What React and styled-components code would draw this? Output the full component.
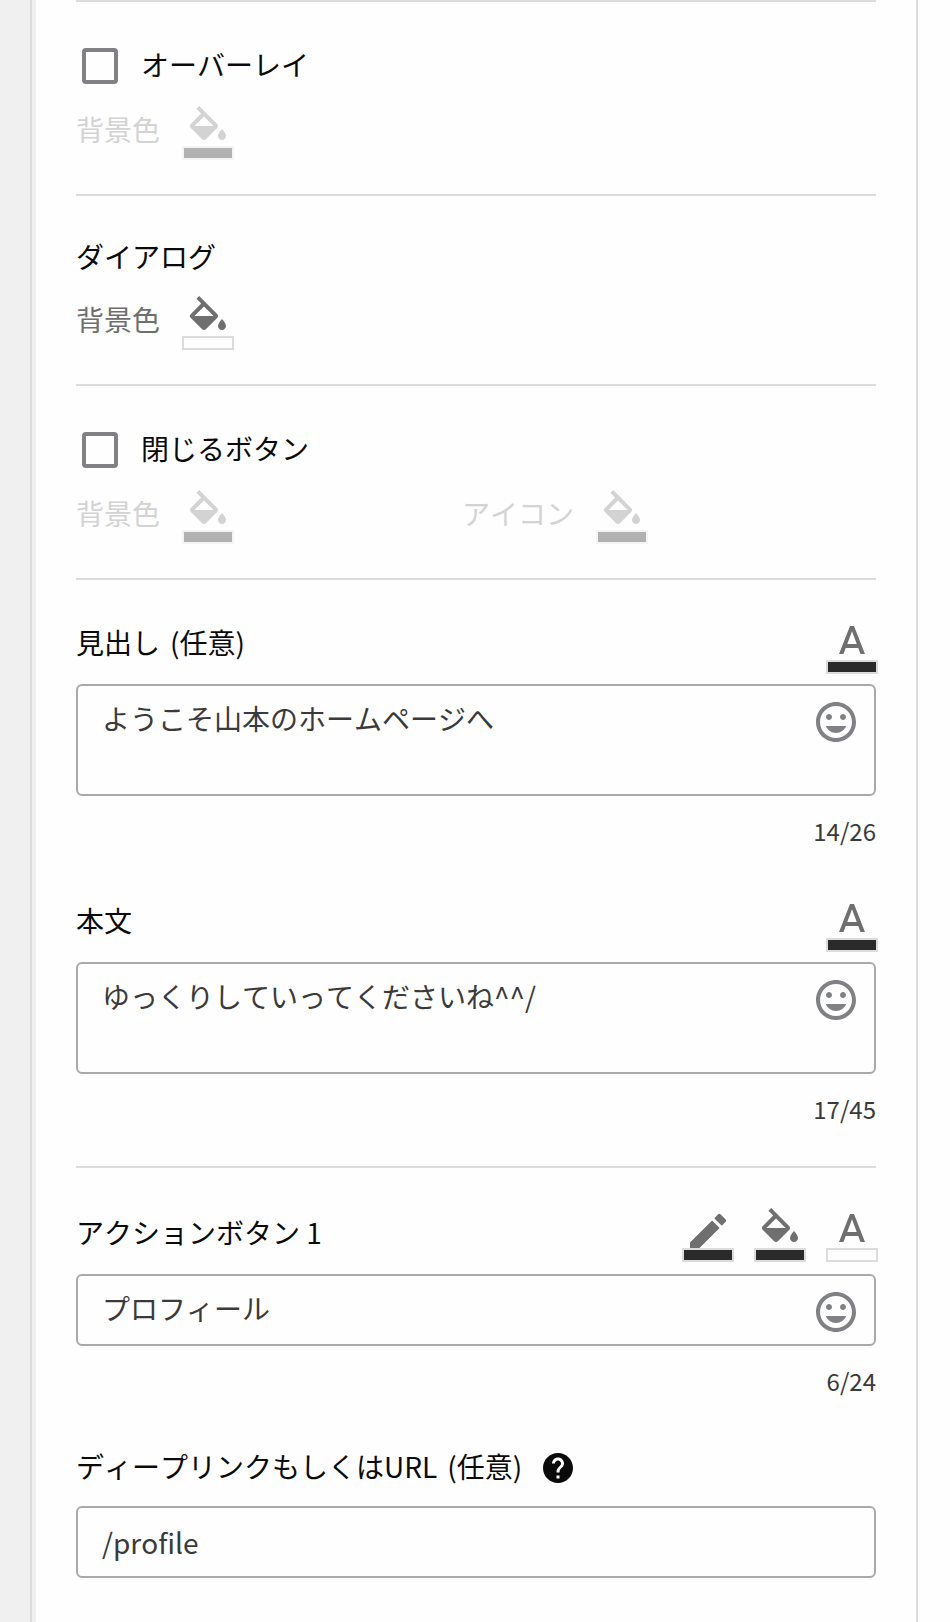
import React, { useId, useState } from "react";
import styled, { createGlobalStyle, css } from "styled-components";

const color = {
  page: "#fefefe",
  rail: "#f0f0f0",
  line: "#dcdcdc",
  ink: "#0a0a0a",
  text: "#3a3a3a",
  muted: "#6f6f6f",
  disabled: "#d3d3d3",
  control: "#808184",
  field: "#a9a9ae",
  swatch: "#2a2a2a",
};

const GlobalStyle = createGlobalStyle`
  *, *::before, *::after { box-sizing: border-box; }
  body {
    margin: 0;
    background: ${color.page};
    color: ${color.ink};
    font-family: "Noto Sans CJK JP", sans-serif;
    font-size: 28px;
    font-kerning: none;
  }
  button, input, textarea { font: inherit; font-kerning: none; }
`;

const Shell = styled.div`
  display: flex;
  min-height: 100vh;
  padding-right: 32px;
`;

const Rail = styled.div`
  flex: none;
  width: 30px;
  background: ${color.rail};
`;

const Panel = styled.main`
  display: flex;
  flex: 1;
  min-width: 0;
  border: solid ${color.line};
  border-width: 0 2px;
`;

const PanelEdge = styled.div`
  flex: none;
  width: 4px;
  background: ${color.rail};
`;

const Form = styled.form`
  flex: 1;
  min-width: 0;
  padding: 0 40px;
`;

const Section = styled.section`
  padding: 40px 0 ${(p) => p.$bottom || 34}px;
  border-top: 2px solid ${color.line};
`;

const SectionTitle = styled.h2`
  margin: 0 0 20px;
  font-size: 28px;
  font-weight: 400;
  line-height: 40px;
`;

const CheckRow = styled.div`
  display: flex;
  align-items: center;
  gap: 17px;
  height: 48px;
  margin-bottom: 16px;
`;

const Checkbox = styled.input`
  appearance: none;
  flex: none;
  width: 36px;
  height: 36px;
  margin: 6px;
  border: 4px solid ${color.control};
  border-radius: 4px;
  background: ${color.page};

  &:checked {
    background: ${color.control};
  }
`;

const CheckLabel = styled.label`
  padding-bottom: 4px;
  line-height: 40px;
`;

const ColorGrid = styled.div`
  display: grid;
  grid-template-columns: calc(50% - 14px) 1fr;
`;

const ColorItem = styled.div`
  display: flex;
  align-items: flex-start;
  gap: 22px;
`;

const ColorName = styled.span`
  color: ${(p) => (p.$disabled ? color.disabled : color.muted)};
  line-height: 46px;
`;

const PickerButton = styled.button`
  display: flex;
  flex-direction: column;
  align-items: center;
  flex: none;
  width: 52px;
  padding: 0;
  border: 0;
  background: none;
  color: ${color.muted};
  cursor: pointer;

  &:disabled {
    color: ${color.disabled};
    cursor: default;
  }
`;

const Swatch = styled.span`
  width: 52px;
  height: 14px;
  border: 2px solid ${color.line};
  background: ${(p) => p.$fill};

  ${PickerButton}:disabled & {
    border-color: #f4f4f4;
    background: #b1b1b1;
  }
`;

const PickerIcon = styled.svg.attrs({
  viewBox: "0 0 24 20",
  width: 48,
  height: 40,
  fill: "currentColor",
  "aria-hidden": true,
})`
  display: block;
`;

const FieldGroup = styled.div`
  & + & {
    margin-top: 48px;
  }
`;

const FieldHeader = styled.div`
  display: flex;
  align-items: flex-start;
  justify-content: space-between;
  margin-bottom: ${(p) => (p.$single ? 12 : 10)}px;
`;

const FieldLabel = styled.label`
  line-height: ${(p) => (p.$single ? 48 : 44)}px;
`;

const OptionalMark = styled.span`
  margin-left: 10px;
`;

const Pickers = styled.div`
  display: flex;
  gap: 20px;
  margin-right: -2px;
`;

const FieldBox = styled.div`
  display: flex;
  align-items: flex-start;
  height: ${(p) => (p.$single ? 72 : 112)}px;
  border: 2px solid ${color.field};
  border-radius: 6px;
`;

const control = css`
  display: block;
  flex: 1;
  min-width: 0;
  margin: 0;
  border: 0;
  outline: 0;
  background: none;
  color: ${color.text};
  line-height: 40px;
`;

const TextArea = styled.textarea`
  ${control}
  height: 100%;
  padding: 12px 24px;
  resize: none;
`;

const TextInput = styled.input`
  ${control}
  height: 100%;
  padding: ${(p) => (p.$centered ? "14px 24px" : "12px 24px 16px")};
`;

const EmojiButton = styled.button`
  flex: none;
  width: 48px;
  height: 48px;
  margin: 12px 14px 8px 0;
  padding: 0;
  border: 0;
  background: none;
  color: ${color.control};
  cursor: pointer;

  svg {
    display: block;
  }
`;

const Counter = styled.div`
  margin-top: 16px;
  color: ${color.text};
  font-size: 24px;
  line-height: 38px;
  text-align: right;
`;

const LinkHeader = styled.div`
  display: flex;
  align-items: flex-end;
  gap: 18px;
  margin-bottom: 20px;
`;

const LinkLabel = styled.label`
  padding-bottom: 2px;
  line-height: 36px;
`;

const HelpButton = styled.button`
  width: 36px;
  height: 36px;
  padding: 0;
  border: 0;
  background: none;
  color: ${color.ink};
  cursor: pointer;

  svg {
    display: block;
  }
`;

const iconPaths = {
  fill: "M16.56 8.94L7.62 0 6.21 1.41l2.38 2.38-5.15 5.15a1.49 1.49 0 0 0 0 2.12l5.5 5.5c.29.29.68.44 1.06.44s.77-.15 1.06-.44l5.5-5.5c.59-.58.59-1.53 0-2.12zM5.21 10L10 5.21 14.79 10H5.21zM19 11.5s-2 2.17-2 3.5c0 1.1.9 2 2 2s2-.9 2-2c0-1.33-2-3.5-2-3.5z",
  text: "M11 3L5.5 17h2.25l1.12-3h6.25l1.12 3h2.25L13 3h-2zm-1.38 9L12 5.67 14.38 12H9.62z",
  border:
    "M3 17.25V21h3.75L17.81 9.94l-3.75-3.75L3 17.25zM20.71 7.04a.996.996 0 0 0 0-1.41l-2.34-2.34a.996.996 0 0 0-1.41 0l-1.83 1.83 3.75 3.75 1.83-1.83z",
};

function ColorPicker({ icon, fill = color.swatch, ...rest }) {
  return (
    <PickerButton type="button" {...rest}>
      <PickerIcon>
        <path d={iconPaths[icon]} />
      </PickerIcon>
      <Swatch $fill={fill} />
    </PickerButton>
  );
}

function ColorSetting({ name, fill, disabled }) {
  const id = useId();
  return (
    <ColorItem>
      <ColorName id={id} $disabled={disabled}>
        {name}
      </ColorName>
      <ColorPicker icon="fill" fill={fill} disabled={disabled} aria-labelledby={id} />
    </ColorItem>
  );
}

function CheckSection({ label, colors }) {
  const id = useId();
  const [checked, setChecked] = useState(false);
  return (
    <Section>
      <CheckRow>
        <Checkbox
          id={id}
          type="checkbox"
          checked={checked}
          onChange={(e) => setChecked(e.target.checked)}
        />
        <CheckLabel htmlFor={id}>{label}</CheckLabel>
      </CheckRow>
      <ColorGrid>
        {colors.map((name) => (
          <ColorSetting key={name} name={name} disabled={!checked} />
        ))}
      </ColorGrid>
    </Section>
  );
}

function TextField({ label, optional, initial, max, single, pickers }) {
  const id = useId();
  const [value, setValue] = useState(initial);
  const Control = single ? TextInput : TextArea;
  return (
    <FieldGroup>
      <FieldHeader $single={single}>
        <FieldLabel htmlFor={id} $single={single}>
          {label}
          {optional && <OptionalMark>(任意)</OptionalMark>}
        </FieldLabel>
        <Pickers>
          {pickers.map((p) => (
            <ColorPicker key={p.icon} icon={p.icon} fill={p.fill} aria-label={p.name} />
          ))}
        </Pickers>
      </FieldHeader>
      <FieldBox $single={single}>
        <Control id={id} value={value} maxLength={max} onChange={(e) => setValue(e.target.value)} />
        <EmojiButton type="button" aria-label="絵文字">
          <svg viewBox="0 0 24 24" width="48" height="48" fill="currentColor" aria-hidden="true">
            <path d="M11.99 2C6.47 2 2 6.48 2 12s4.47 10 9.99 10C17.52 22 22 17.52 22 12S17.52 2 11.99 2zM12 20c-4.42 0-8-3.58-8-8s3.58-8 8-8 8 3.58 8 8-3.58 8-8 8zm3.5-9c.83 0 1.5-.67 1.5-1.5S16.33 8 15.5 8 14 8.67 14 9.5s.67 1.5 1.5 1.5zm-7 0c.83 0 1.5-.67 1.5-1.5S9.33 8 8.5 8 7 8.67 7 9.5 7.67 11 8.5 11zm3.5 6.5c2.33 0 4.31-1.46 5.11-3.5H6.89c.8 2.04 2.78 3.5 5.11 3.5z" />
          </svg>
        </EmojiButton>
      </FieldBox>
      <Counter>
        {value.length}/{max}
      </Counter>
    </FieldGroup>
  );
}

function LinkField({ label, optional, initial }) {
  const id = useId();
  const [value, setValue] = useState(initial);
  return (
    <FieldGroup>
      <LinkHeader>
        <LinkLabel htmlFor={id}>
          {label}
          {optional && <OptionalMark>(任意)</OptionalMark>}
        </LinkLabel>
        <HelpButton type="button" aria-label="ヘルプ">
          <svg viewBox="0 0 24 24" width="36" height="36" fill="currentColor" aria-hidden="true">
            <path d="M12 2C6.48 2 2 6.48 2 12s4.48 10 10 10 10-4.48 10-10S17.52 2 12 2zm1 17h-2v-2h2v2zm2.07-7.75l-.9.92C13.45 12.9 13 13.5 13 15h-2v-.5c0-1.1.45-2.1 1.17-2.83l1.24-1.26c.37-.36.59-.86.59-1.41 0-1.1-.9-2-2-2s-2 .9-2 2H8c0-2.21 1.79-4 4-4s4 1.79 4 4c0 .88-.36 1.68-.93 2.25z" />
          </svg>
        </HelpButton>
      </LinkHeader>
      <FieldBox $single>
        <TextInput id={id} $centered value={value} onChange={(e) => setValue(e.target.value)} />
      </FieldBox>
    </FieldGroup>
  );
}

const textColor = { icon: "text", name: "文字色" };

export default function App() {
  return (
    <>
      <GlobalStyle />
      <Shell>
        <Rail />
        <Panel>
          <PanelEdge />
          <Form onSubmit={(e) => e.preventDefault()}>
            <CheckSection label="オーバーレイ" colors={["背景色"]} />
            <Section>
              <SectionTitle>ダイアログ</SectionTitle>
              <ColorSetting name="背景色" fill="#ffffff" />
            </Section>
            <CheckSection label="閉じるボタン" colors={["背景色", "アイコン"]} />
            <Section $bottom={38}>
              <TextField
                label="見出し"
                optional
                initial="ようこそ山本のホームページへ"
                max={26}
                pickers={[textColor]}
              />
              <TextField
                label="本文"
                initial="ゆっくりしていってくださいね^^/"
                max={45}
                pickers={[textColor]}
              />
            </Section>
            <Section $bottom={44}>
              <TextField
                single
                label="アクションボタン 1"
                initial="プロフィール"
                max={24}
                pickers={[
                  { icon: "border", name: "枠線の色" },
                  { icon: "fill", name: "背景色" },
                  { ...textColor, fill: "#ffffff" },
                ]}
              />
              <LinkField label="ディープリンクもしくはURL" optional initial="/profile" />
            </Section>
          </Form>
        </Panel>
      </Shell>
    </>
  );
}
